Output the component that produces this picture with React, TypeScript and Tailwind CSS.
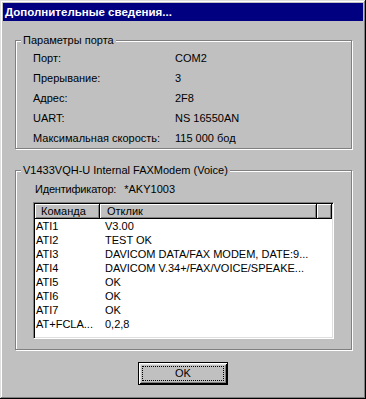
import React from 'react';

const params: [string, string][] = [
  ['Порт:', 'COM2'],
  ['Прерывание:', '3'],
  ['Адрес:', '2F8'],
  ['UART:', 'NS 16550AN'],
  ['Максимальная скорость:', '115 000 бод'],
];

const responses: [string, string][] = [
  ['ATI1', 'V3.00'],
  ['ATI2', 'TEST OK'],
  ['ATI3', 'DAVICOM DATA/FAX MODEM, DATE:9...'],
  ['ATI4', 'DAVICOM V.34+/FAX/VOICE/SPEAKE...'],
  ['ATI5', 'OK'],
  ['ATI6', 'OK'],
  ['ATI7', 'OK'],
  ['AT+FCLA...', '0,2,8'],
];

const GroupBox: React.FC<{ title: string; className?: string; children: React.ReactNode }> = ({
  title,
  className,
  children,
}) => (
  <div
    className={`relative w-[337px] border border-[#808080] shadow-[1px_1px_0_#fff,inset_1px_1px_0_#fff] ${className ?? ''}`}
  >
    {/* legend sits over the etched line */}
    <span className="absolute -top-[7px] left-[5px] bg-[#c0c0c0] px-[2px] leading-[13px] whitespace-nowrap">
      {title}
    </span>
    {children}
  </div>
);

const headerCell =
  'h-full bg-[#c0c0c0] leading-[15px] whitespace-nowrap shadow-[inset_-1px_-1px_0_#000,inset_1px_1px_0_#fff,inset_-2px_-2px_0_#808080]';

export default function App() {
  return (
    <div className="w-[366px] h-[399px] bg-[#c0c0c0] p-[3px] flex flex-col text-[11px] text-black font-['Liberation_Sans',Arial,sans-serif] shadow-[inset_-1px_-1px_0_#000,inset_1px_1px_0_#dfdfdf,inset_-2px_-2px_0_#808080,inset_2px_2px_0_#fff]">
      {/* Title bar */}
      <div className="h-[18px] bg-[#000080] text-white font-bold pl-[2px] leading-[18px] text-[11.5px]">
        Дополнительные сведения...
      </div>

      <div className="flex flex-col pl-[12px] pt-[19px]">
        {/* Port parameters */}
        <GroupBox title="Параметры порта" className="h-[109px]">
          <div className="pt-[7px] pl-[17px] flex flex-col">
            {params.map(([label, value]) => (
              <div key={label} className="flex h-[20px] leading-[20px]">
                <span className="w-[142px] whitespace-nowrap">{label}</span>
                <span className="whitespace-nowrap">{value}</span>
              </div>
            ))}
          </div>
        </GroupBox>

        {/* Modem */}
        <GroupBox title="V1433VQH-U Internal FAXModem (Voice)" className="h-[180px] mt-[21px]">
          <div className="pt-[11px] flex flex-col">
            <div className="flex h-[14px] leading-[14px] pl-[19px] whitespace-nowrap">
              <span className="tracking-[-0.2px]">Идентификатор:</span>
              <span className="ml-[8px]">*AKY1003</span>
            </div>

            {/* List view */}
            <div className="ml-[17px] mt-[6px] w-[301px] h-[137px] bg-white p-px border border-t-[#808080] border-l-[#808080] border-r-white border-b-white shadow-[inset_1px_1px_0_#000,inset_-1px_-1px_0_#dfdfdf] flex flex-col">
              <div className="flex h-[15px] shrink-0">
                <div className={`${headerCell} w-[65px] pl-[6px]`}>Команда</div>
                <div className={`${headerCell} w-[217px] pl-[7px]`}>Отклик</div>
                <div className={`${headerCell} flex-1`} />
              </div>
              {responses.map(([cmd, resp]) => (
                <div key={cmd} className="flex h-[14px] leading-[14px] whitespace-nowrap">
                  <span className="w-[65px] pl-[1px]">{cmd}</span>
                  <span className="pl-[5px]">{resp}</span>
                </div>
              ))}
            </div>
          </div>
        </GroupBox>
      </div>

      {/* OK button */}
      <div className="flex justify-center mt-[12px]">
        <button className="w-[90px] h-[23px] border border-black bg-[#c0c0c0] flex p-[2px] shadow-[inset_1px_1px_0_#fff,inset_-1px_-1px_0_#000,inset_2px_2px_0_#dfdfdf,inset_-2px_-2px_0_#808080]">
          <span className="flex-1 m-px border border-dotted border-black flex items-center justify-center leading-[13px]">
            OK
          </span>
        </button>
      </div>
    </div>
  );
}
